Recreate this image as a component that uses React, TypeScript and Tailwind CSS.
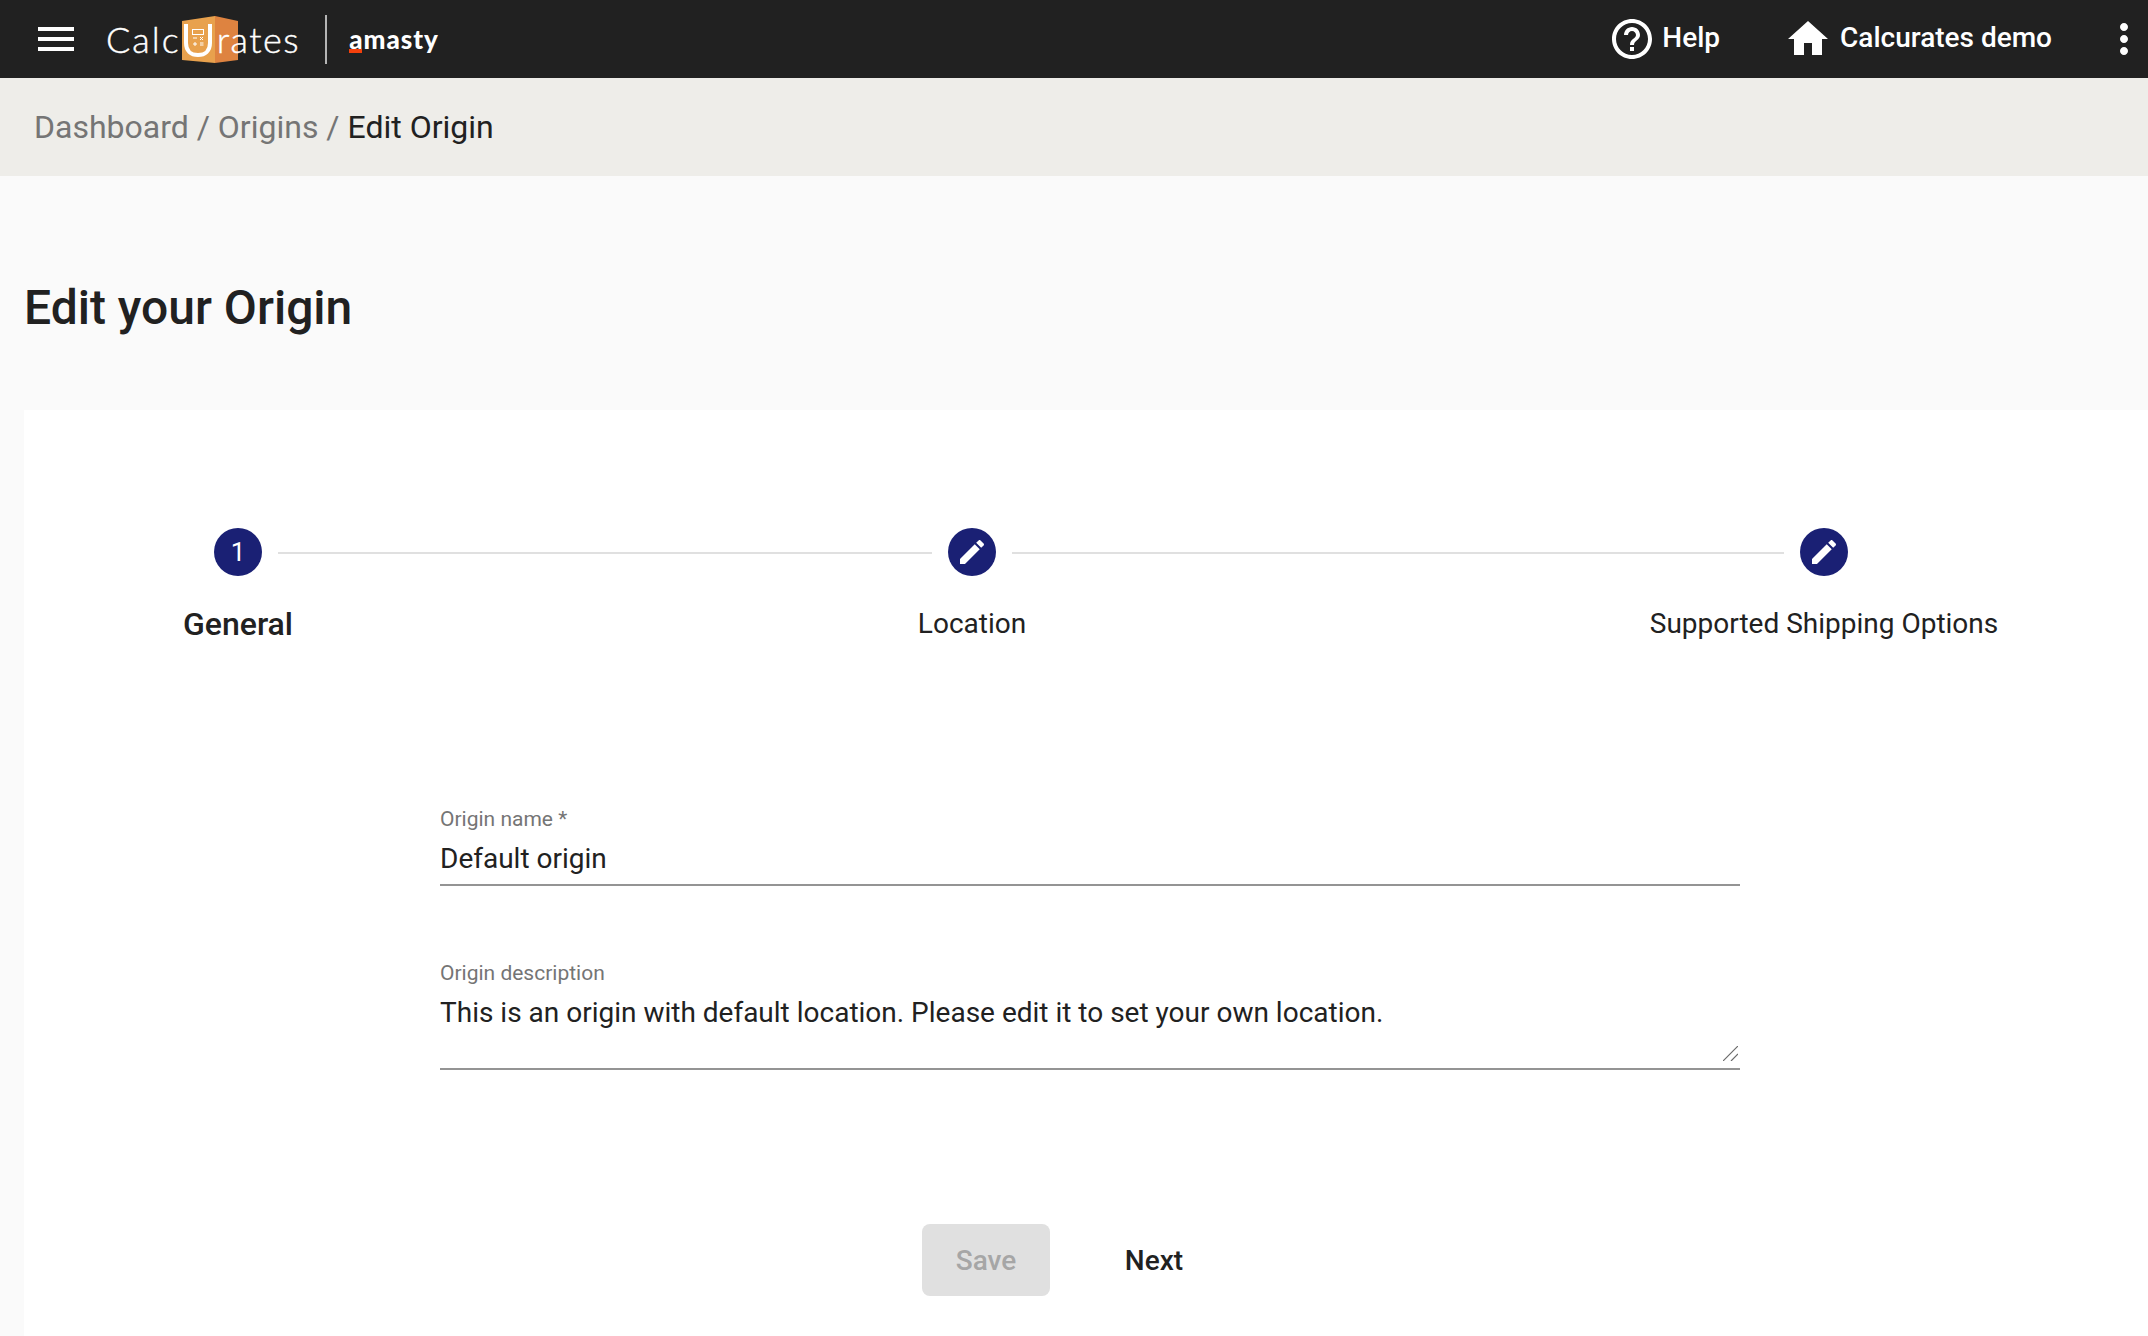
import React from "react";

function HelpIcon() {
    return (
        <svg viewBox="0 0 24 24" className="w-12 h-12 fill-white">
            <path d="M11 18h2v-2h-2v2zm1-16C6.48 2 2 6.48 2 12s4.48 10 10 10 10-4.48 10-10S17.52 2 12 2zm0 18c-4.41 0-8-3.59-8-8s3.59-8 8-8 8 3.59 8 8-3.59 8-8 8zm0-14c-2.21 0-4 1.79-4 4h2c0-1.1.9-2 2-2s2 .9 2 2c0 2-3 1.75-3 5h2c0-2.25 3-2.5 3-5 0-2.21-1.79-4-4-4z"/>
        </svg>
    );
}

function HomeIcon() {
    return (
        <svg viewBox="0 0 24 24" className="w-12 h-12 fill-white">
            <path d="M10 20v-6h4v6h5v-8h3L12 3 2 12h3v8z"/>
        </svg>
    );
}

function MoreIcon() {
    return (
        <svg viewBox="0 0 24 24" className="w-12 h-12 fill-white">
            <path d="M12 8c1.1 0 2-.9 2-2s-.9-2-2-2-2 .9-2 2 .9 2 2 2zm0 2c-1.1 0-2 .9-2 2s.9 2 2 2 2-.9 2-2-.9-2-2-2zm0 6c-1.1 0-2 .9-2 2s.9 2 2 2 2-.9 2-2-.9-2-2-2z"/>
        </svg>
    );
}

function EditIcon() {
    return (
        <svg viewBox="0 0 24 24" className="w-8 h-8 fill-white">
            <path d="M3 17.25V21h3.75L17.81 9.94l-3.75-3.75L3 17.25zM20.71 7.04c.39-.39.39-1.02 0-1.41l-2.34-2.34c-.39-.39-1.02-.39-1.41 0l-1.83 1.83 3.75 3.75 1.83-1.83z"/>
        </svg>
    );
}

function LogoBox() {
    return (
        <svg viewBox="0 0 56 47" className="w-14 h-[47px] shrink-0">
            <path d="M0 5 33 0V47L0 44z" fill="#e8a14d"/>
            <path d="M33 0 56 5V44L33 47z" fill="#de8340"/>
            <path d="M4 8V27C4 35 9 39 16 39S28 35 28 27V8" fill="none" stroke="#fff" strokeWidth="4"/>
            <rect x="10.5" y="13.5" width="11" height="5" fill="none" stroke="#fff" strokeWidth="1"/>
            <path d="M11 22h4M18 21l3 3M21 21l-3 3M11 28h4M13 26v4M18 27h3.5M18 29h3.5" stroke="#fff" strokeWidth="1" fill="none"/>
        </svg>
    );
}

function Logo() {
    return (
        <div className="flex items-center">
            <div className="flex items-center ml-[32px] text-white font-[family-name:Lato,sans-serif] text-[36px] tracking-[2px] leading-none">
                <span className="font-light [-webkit-text-stroke:0.4px_white]">Calc</span>
                <span className="flex ml-[1px] mr-[2px] z-0"><LogoBox/></span>
                <span className="-ml-[23px] z-10 tracking-[1.5px] font-light [-webkit-text-stroke:0.4px_white]">rates</span>
            </div>
            <div className="w-[2px] h-[49px] bg-[#b5b5b5] ml-[25px]"/>
            <div className="relative ml-[22px] text-white font-[family-name:Lato,sans-serif] font-black text-[26px] tracking-[1px] leading-none">
                amasty
                <div className="absolute left-0 bottom-[-1px] w-[13px] h-[4px] bg-[#f4400c]"/>
            </div>
        </div>
    );
}

function Header() {
    return (
        <div className="h-[78px] bg-[#212121] flex items-center shrink-0">
            <div className="flex flex-col gap-[6px] ml-[38px] w-[36px]">
                <div className="h-1 bg-white"/>
                <div className="h-1 bg-white"/>
                <div className="h-1 bg-white"/>
            </div>
            <Logo/>
            <div className="ml-auto flex items-center text-white font-medium text-[28px]">
                <HelpIcon/>
                <span className="ml-[6px] -mt-[3px]">Help</span>
                <span className="ml-[64px] flex"><HomeIcon/></span>
                <span className="ml-[8px] -mt-[3px]">Calcurates demo</span>
                <span className="ml-[48px] flex"><MoreIcon/></span>
            </div>
        </div>
    );
}

function Stepper() {
    return (
        <div className="grid grid-cols-[48px_686px_48px_804px_48px] ml-[190px]">
            <div className="w-12 h-12 rounded-full bg-[#1a2074] flex items-center justify-center text-white text-[26px]">1</div>
            <div className="h-[2px] bg-[#e0e0e0] mx-4 mt-[2px] self-center"/>
            <div className="w-12 h-12 rounded-full bg-[#1a2074] flex items-center justify-center"><EditIcon/></div>
            <div className="h-[2px] bg-[#e0e0e0] mx-4 mt-[2px] self-center"/>
            <div className="w-12 h-12 rounded-full bg-[#1a2074] flex items-center justify-center"><EditIcon/></div>

            <div className="flex justify-center whitespace-nowrap mt-[30px] text-[32px] leading-[36px] font-medium">General</div>
            <div/>
            <div className="flex justify-center whitespace-nowrap mt-[30px] text-[28px] leading-[36px]">Location</div>
            <div/>
            <div className="flex justify-center whitespace-nowrap mt-[30px] text-[28px] leading-[36px]">Supported Shipping Options</div>
        </div>
    );
}

export default function App() {
    return (
        <div className="h-[1336px] overflow-hidden flex flex-col bg-[#fafafa] text-[#212121] font-[family-name:Roboto,sans-serif]">
            <Header/>
            <div className="h-[98px] shrink-0 bg-[#eeede9] flex items-center pl-[34px] text-[32px] text-[#757575]">
                <span>Dashboard / Origins / </span>
                <span className="text-[#212121] ml-[8px]">Edit Origin</span>
            </div>
            <h1 className="pl-6 pt-[108px] mb-[78px] text-[48px] leading-[48px] font-medium">Edit your Origin</h1>
            <div className="flex-1 ml-6 bg-white pt-[118px]">
                <Stepper/>
                <div className="ml-[416px] w-[1300px] mt-[165px]">
                    <label className="block text-[21px] leading-[24px] text-[#757575]">Origin name *</label>
                    <input
                        defaultValue="Default origin"
                        className="block w-full mt-[9px] h-[46px] pb-[8px] border-b-2 border-[#949494] text-[28px] leading-[36px] outline-none"/>
                    <label className="block mt-[75px] text-[21px] leading-[24px] text-[#757575]">Origin description</label>
                    <div className="relative mt-[10px] h-[75px] border-b-2 border-[#949494]">
                        <textarea
                            defaultValue="This is an origin with default location. Please edit it to set your own location."
                            className="block w-full h-full text-[28px] leading-[36px] outline-none resize-none"/>
                        <svg viewBox="0 0 15 15" className="absolute right-[2px] bottom-[7px] w-[15px] h-[15px] stroke-[#6b6b6b]">
                            <path d="M0 15 15 0M8 15l7-7" fill="none" strokeWidth="1.2"/>
                        </svg>
                    </div>
                </div>
                <div className="flex items-center ml-[898px] mt-[154px]">
                    <button disabled className="w-[128px] h-[72px] pt-[2px] rounded-[8px] bg-[#e0e0e0] text-[#a6a6a6] text-[28px] font-medium">Save</button>
                    <button className="w-[128px] h-[72px] pt-[2px] ml-[40px] text-[28px] font-medium">Next</button>
                </div>
            </div>
        </div>
    );
}
